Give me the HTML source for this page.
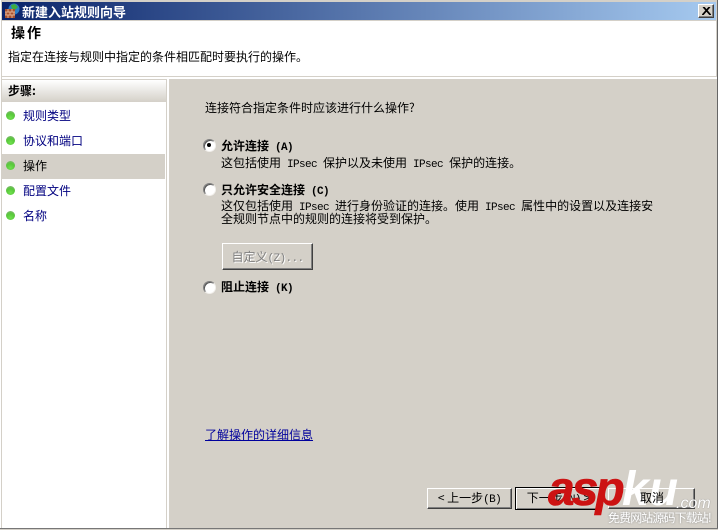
<!DOCTYPE html>
<html><head><meta charset="utf-8">
<style>
html,body{margin:0;padding:0;}
body{width:718px;height:530px;position:relative;overflow:hidden;background:#d4d0c8;font-family:"WenQuanYi Zen Hei","Noto Sans CJK SC","Liberation Sans",sans-serif;font-size:12px;color:#000;}
.a{position:absolute;white-space:nowrap;line-height:12px;}
.b{font-weight:bold;}
.r{position:absolute;}
.m{font-family:"Liberation Mono",monospace;font-size:11px;letter-spacing:-0.6px;margin:0 6px;}
.n{font-family:"Liberation Mono",monospace;font-size:11px;letter-spacing:-0.6px;margin-left:6px;}
.t{font-family:"Liberation Mono",monospace;font-size:11px;letter-spacing:-0.6px;}
.link{color:#000080;}
.dot{position:absolute;left:6px;width:9px;height:9px;border-radius:50%;background:radial-gradient(circle at 50% 75%,#70e050 0,#58c83a 50%,#8fb088 100%);}
.radio{position:absolute;left:203px;width:11px;height:11px;border-radius:50%;background:#fff;border:1px solid #808080;border-right-color:#f2f0ec;border-bottom-color:#f2f0ec;box-shadow:inset 1px 1px 0 #555;}
.btn{position:absolute;box-sizing:border-box;background:#d4d0c8;border:1px solid;border-color:#fff #404040 #404040 #fff;box-shadow:inset -1px -1px 0 #808080;text-align:center;}
.w{font:italic bold 48px/50px 'Liberation Sans',sans-serif;}
</style></head>
<body>
<div class="r" style="left:0;top:0;width:1px;height:530px;background:#fff;"></div>
<div class="r" style="left:1px;top:0;width:1px;height:528px;background:#d4d0c8;"></div>
<div class="r" style="left:717px;top:0;width:1px;height:530px;background:#666;"></div>
<div class="r" style="left:0;top:528px;width:718px;height:1px;background:#777;"></div>
<div class="r" style="left:0;top:529px;width:718px;height:1px;background:#d4d0c8;"></div>

<div class="r" style="left:2px;top:2px;width:714px;height:18px;background:linear-gradient(90deg,#0a246a,#a6caf0);"></div>
<svg style="position:absolute;left:4px;top:3px" width="16" height="16" viewBox="0 0 16 16">
<circle cx="10" cy="6" r="5.5" fill="#2a7fc8"/><path d="M7 2l4-1 3 3-3 3-3-1z" fill="#3fae3f"/>
<rect x="1" y="6" width="10" height="9" fill="#a8502c"/>
<path d="M1 9h10M1 12h10M4 6v3M8 6v3M2 9v3M6 9v3M10 9v3M4 12v3M8 12v3" stroke="#e0b090" stroke-width="1" fill="none"/>
</svg>
<div class="a b" style="left:22px;top:5px;color:#fff;font-size:13px;line-height:13px;">新建入站规则向导</div>
<div class="btn" style="left:698px;top:4px;width:16px;height:14px;"><svg style="position:absolute;left:3px;top:2px" width="9" height="8" viewBox="0 0 9 8"><path d="M1 0L8 8M2 0L9 8M8 0L1 8M7 0L0 8" stroke="#000" stroke-width="1" fill="none"/></svg></div>

<div class="r" style="left:2px;top:21px;width:714px;height:55px;background:#fff;"></div>
<div class="r" style="left:2px;top:77px;width:715px;height:2px;background:#fff;"></div>
<div class="a b" style="left:11px;top:26px;font-size:14px;line-height:15px;letter-spacing:2px;">操作</div>
<div class="a" style="left:8px;top:51px;">指定在连接与规则中指定的条件相匹配时要执行的操作。</div>

<div class="r" style="left:167px;top:79px;width:2px;height:449px;background:#fff;"></div>
<div class="r" style="left:2px;top:80px;width:164px;height:448px;background:#fff;"></div>
<div class="r" style="left:2px;top:80px;width:164px;height:22px;background:linear-gradient(#fff,#d4d0c8);"></div>
<div class="a b" style="left:8px;top:85px;">步骤:</div>
<div class="r" style="left:2px;top:154px;width:163px;height:25px;background:#d4d0c8;"></div>
<div class="dot" style="top:111px;"></div>
<div class="dot" style="top:136px;"></div>
<div class="dot" style="top:161px;"></div>
<div class="dot" style="top:186px;"></div>
<div class="dot" style="top:211px;"></div>
<div class="a link" style="left:23px;top:110px;">规则类型</div>
<div class="a link" style="left:23px;top:135px;">协议和端口</div>
<div class="a" style="left:23px;top:160px;">操作</div>
<div class="a link" style="left:23px;top:185px;">配置文件</div>
<div class="a link" style="left:23px;top:210px;">名称</div>

<div class="a" style="left:205px;top:102px;">连接符合指定条件时应该进行什么操作?</div>

<div class="radio" style="top:139px;"></div>
<div class="r" style="left:207px;top:143px;width:4px;height:4px;border-radius:50%;background:#000;"></div>
<div class="a b" style="left:221px;top:140px;">允许连接<span class="n">(A)</span></div>
<div class="a" style="left:221px;top:157px;">这包括使用<span class="m">IPsec</span>保护以及未使用<span class="m">IPsec</span>保护的连接。</div>

<div class="radio" style="top:183px;"></div>
<div class="a b" style="left:221px;top:184px;">只允许安全连接<span class="n">(C)</span></div>
<div class="a" style="left:221px;top:200px;">这仅包括使用<span class="m">IPsec</span>进行身份验证的连接。使用<span class="m">IPsec</span>属性中的设置以及连接安</div>
<div class="a" style="left:221px;top:213px;">全规则节点中的规则的连接将受到保护。</div>

<div class="btn" style="left:222px;top:243px;width:91px;height:27px;line-height:25px;color:#808080;text-shadow:1px 1px 0 #fff;">自定义<span class="t">(Z)...</span></div>

<div class="radio" style="top:281px;"></div>
<div class="a b" style="left:221px;top:281px;">阻止连接<span class="n">(K)</span></div>

<div class="a link" style="left:205px;top:429px;color:#00009c;text-decoration:underline;">了解操作的详细信息</div>

<div class="btn" style="left:427px;top:488px;width:85px;height:21px;line-height:18px;">&lt; 上一步<span class="t">(B)</span></div>
<div class="btn" style="left:515px;top:487px;width:87px;height:23px;line-height:20px;border:1px solid #000;box-shadow:inset 1px 1px 0 #fff,inset -1px -1px 0 #808080;">下一步<span class="t">(N)</span> &gt;</div>
<div class="btn" style="left:608px;top:488px;width:87px;height:21px;"></div>

<div class="a w" style="left:548px;top:465px;color:#cc1212;letter-spacing:-3px;-webkit-text-stroke:0.6px #cc1212;line-height:50px;">asp</div>
<div class="a w" style="left:622px;top:465px;color:#fff;line-height:50px;">ku</div>
<div class="a" style="left:640px;top:492px;">取消</div>
<div class="a" style="left:676px;top:495px;font:italic 16px/18px 'Liberation Sans',sans-serif;color:#fff;text-shadow:0 0 1px #777;">.com</div>
<div class="a" style="left:608px;top:512px;font-size:12px;letter-spacing:-0.9px;color:#fff;text-shadow:0 0 2px #8a8a8a;">免费网站源码下载站!</div>
</body></html>
